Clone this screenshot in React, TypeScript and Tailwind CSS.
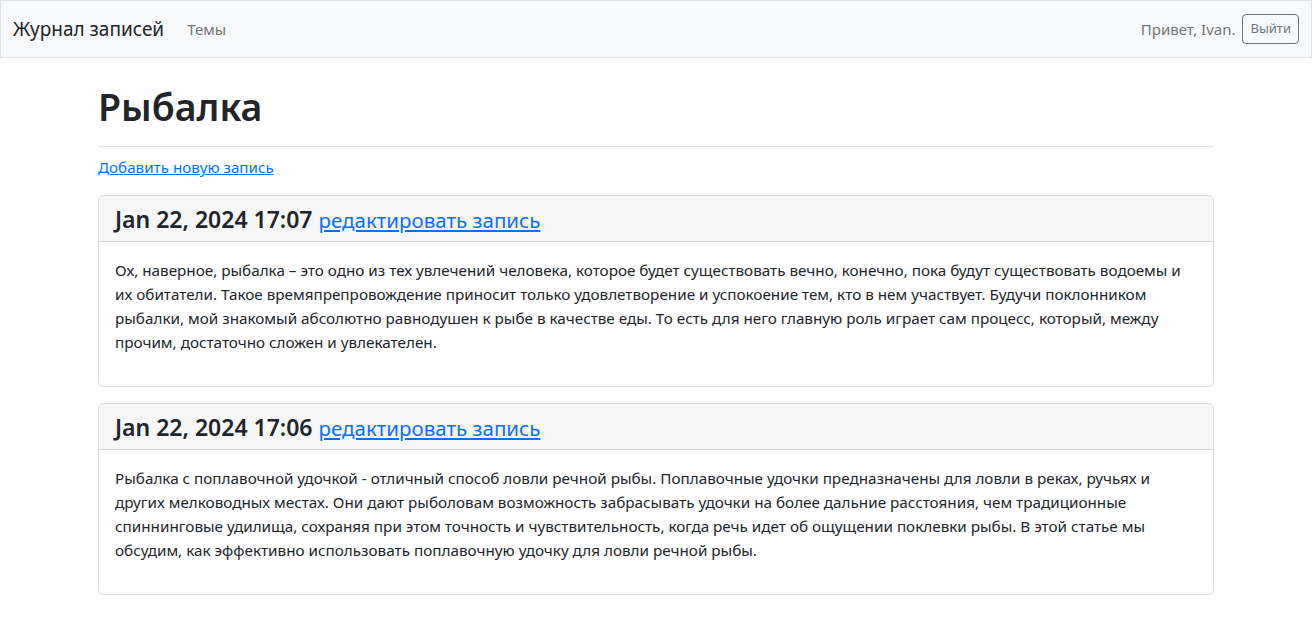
import React from "react";

const entries = [
  {
    date: "Jan 22, 2024 17:07",
    text:
      "Ох, наверное, рыбалка – это одно из тех увлечений человека, которое будет существовать вечно, конечно, пока будут существовать водоемы и их обитатели. Такое времяпрепровождение приносит только удовлетворение и успокоение тем, кто в нем участвует. Будучи поклонником рыбалки, мой знакомый абсолютно равнодушен к рыбе в качестве еды. То есть для него главную роль играет сам процесс, который, между прочим, достаточно сложен и увлекателен.",
  },
  {
    date: "Jan 22, 2024 17:06",
    text:
      "Рыбалка с поплавочной удочкой - отличный способ ловли речной рыбы. Поплавочные удочки предназначены для ловли в реках, ручьях и других мелководных местах. Они дают рыболовам возможность забрасывать удочки на более дальние расстояния, чем традиционные спиннинговые удилища, сохраняя при этом точность и чувствительность, когда речь идет об ощущении поклевки рыбы. В этой статье мы обсудим, как эффективно использовать поплавочную удочку для ловли речной рыбы.",
  },
];

export default function App() {
  return (
    <div
      className="min-h-screen bg-white text-[#212529]"
      style={{ fontFamily: '"Noto Sans", "Open Sans", sans-serif' }}
    >
      <nav className="h-[58px] bg-[#f8f9fa] border border-[#dee2e6] flex items-center px-[12px]">
        <span className="text-[19px] text-[#212529] mr-[23px]">Журнал записей</span>
        <span className="text-[15px] text-[#737475]">Темы</span>
        <div className="ml-auto flex items-center">
          <span className="text-[15px] text-[#737475] mr-[7px]">Привет, Ivan.</span>
          <button className="h-[30px] px-[7px] border border-[#6c757d] rounded-[4px] text-[13px] text-[#6c757d]">
            Выйти
          </button>
        </div>
      </nav>
      <main className="max-w-[1140px] mx-auto px-[12px] pt-[25px]">
        <div className="border-b border-[#dee2e6] pb-[15px]">
          <h1 className="text-[37.5px] leading-[48px] font-semibold">Рыбалка</h1>
        </div>
        <p className="mt-[8px] mb-[16px] text-[15.2px] leading-[24px]">
          <a href="#" className="text-[#0d6efd] underline">Добавить новую запись</a>
        </p>
        {entries.map((e) => (
          <div key={e.date} className="border border-[#d9d9d9] rounded-[6px] mb-[16px] overflow-hidden">
            <div className="bg-[#f7f7f7] border-b border-[#d9d9d9] px-[16px] pt-[9px] pb-[7px]">
              <h4 className="text-[23px] leading-[29px] h-[29px] font-semibold whitespace-nowrap">
                {e.date}{" "}
                <a href="#" className="text-[20.5px] leading-[20px] text-[#0d6efd] underline font-normal">редактировать запись</a>
              </h4>
            </div>
            <div className="p-[16px]">
              <p className="text-[15.25px] leading-[24px] mb-[16px]">{e.text}</p>
            </div>
          </div>
        ))}
      </main>
    </div>
  );
}
